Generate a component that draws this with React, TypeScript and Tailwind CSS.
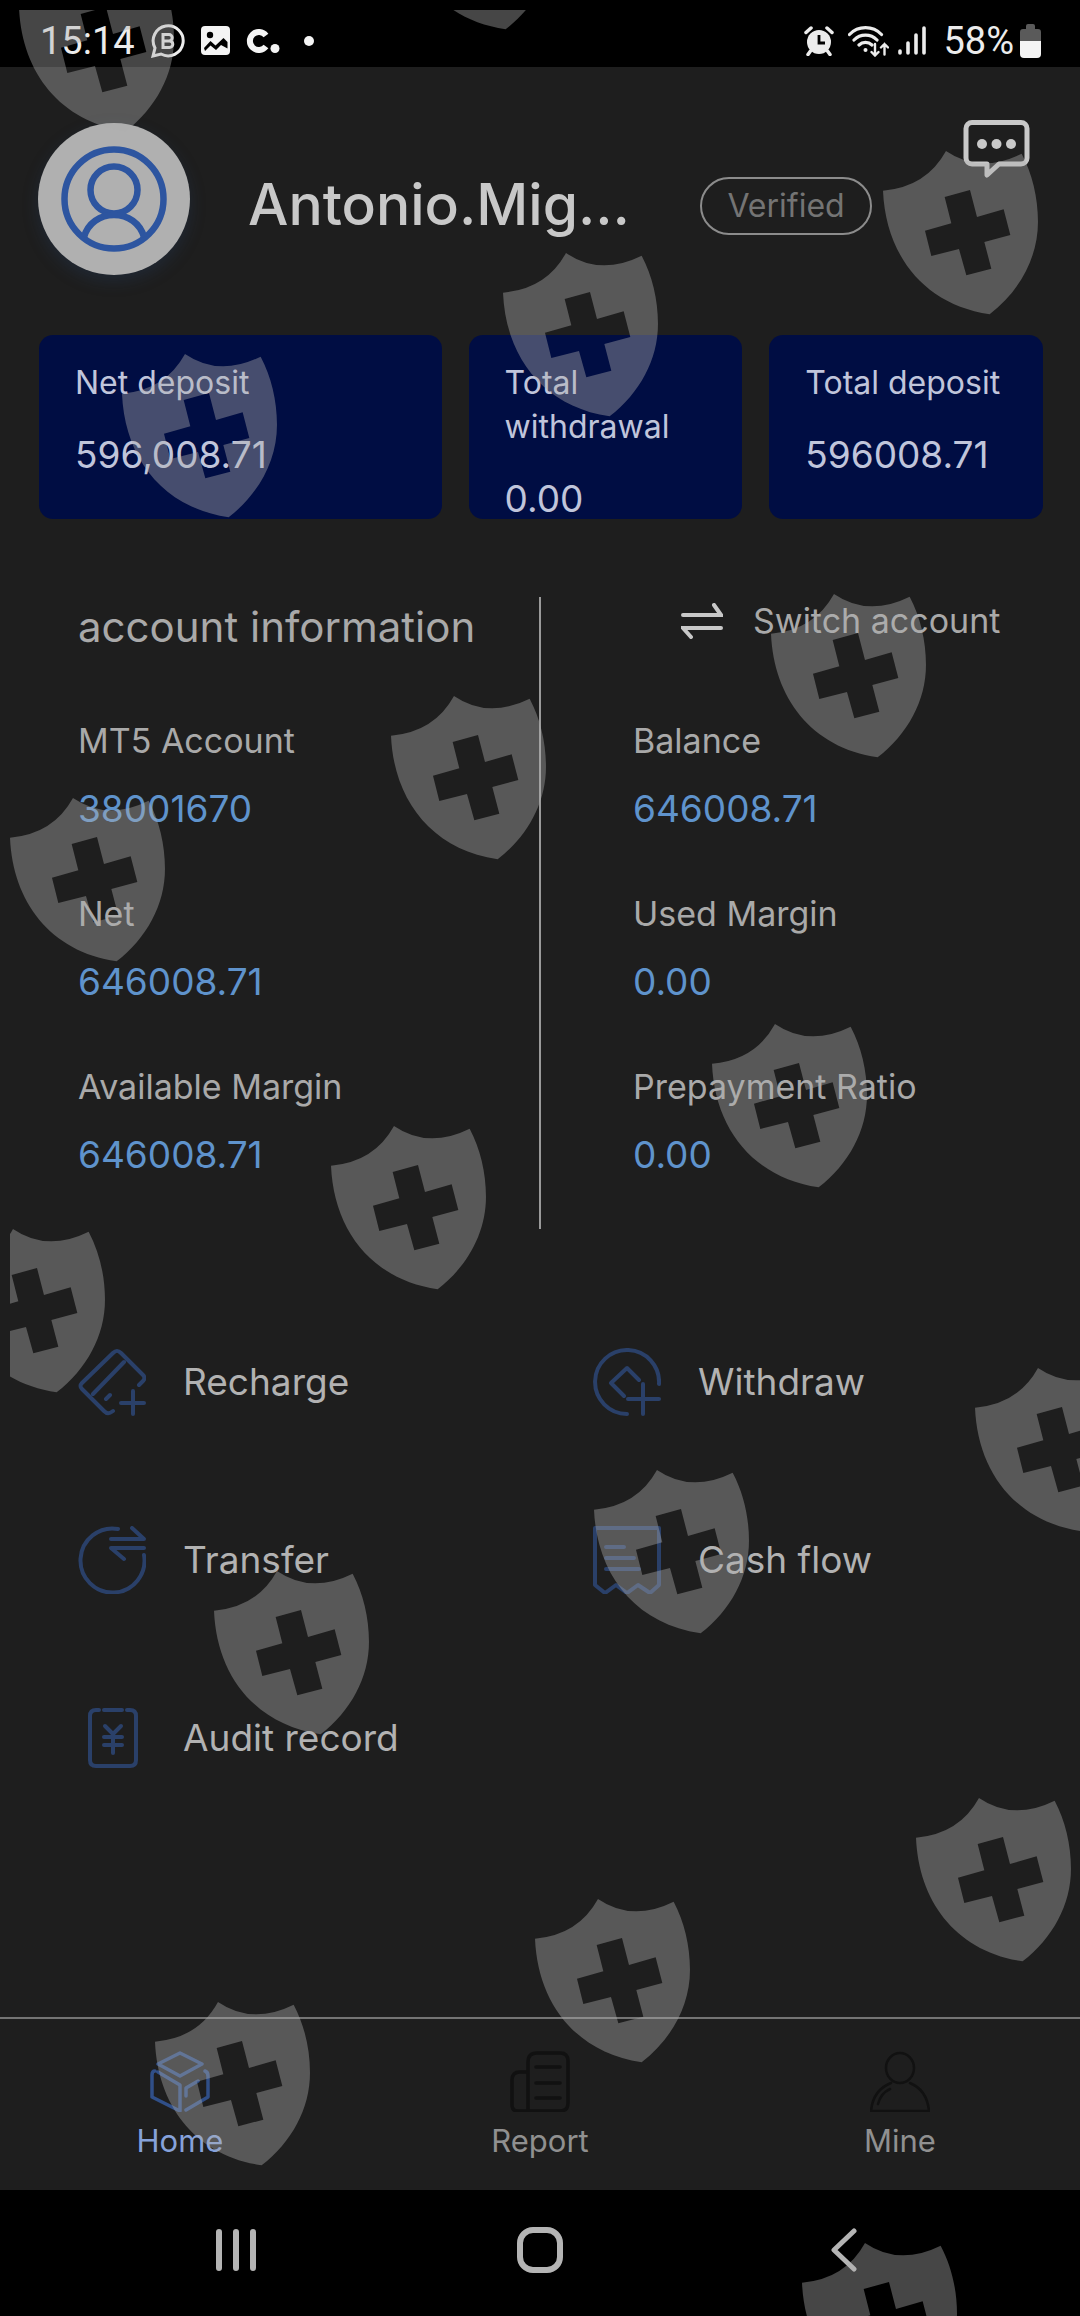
import type { ReactNode } from "react";

const summary = [
  { label: "Net deposit", value: "596,008.71" },
  { label: "Total withdrawal", value: "0.00" },
  { label: "Total deposit", value: "596008.71" },
];

const accountLeft = [
  { label: "MT5 Account", value: "38001670" },
  { label: "Net", value: "646008.71" },
  { label: "Available Margin", value: "646008.71" },
];

const accountRight = [
  { label: "Balance", value: "646008.71" },
  { label: "Used Margin", value: "0.00" },
  { label: "Prepayment Ratio", value: "0.00" },
];

// top left corner of every shield of the security overlay
const shields = [
  [19, -32],
  [399, -134],
  [883, 151],
  [503, 253],
  [122, 354],
  [771, 594],
  [391, 696],
  [10, 798],
  [712, 1024],
  [331, 1126],
  [-50, 1229],
  [975, 1368],
  [594, 1470],
  [214, 1571],
  [916, 1798],
  [535, 1899],
  [155, 2002],
  [802, 2243],
];

function StatusBar() {
  return (
    <header className="flex h-[67px] items-center justify-between bg-black pt-[15px] pr-[39px] pb-[1px] pl-10 font-[Roboto,sans-serif] text-[38px] leading-[50px] text-[#ececec]">
      <div className="flex items-center">
        <span>15:14</span>
        <svg className="ml-4 h-[34px] w-[34px]" viewBox="0 0 34 34" fill="none" stroke="#ececec">
          <path d="M2 32l2-8a15 15 0 1 1 6 6z" strokeWidth="3" />
          <path d="M12 10.500h6a3.200 3.200 0 0 1 0 6.400h-6zM12 16.900h6.500a3.300 3.300 0 0 1 0 6.600H12z" strokeWidth="3" />
        </svg>
        <svg className="ml-4 h-[29px] w-[29px]" viewBox="0 0 29 29">
          <rect width="29" height="29" rx="4" fill="#f4f4f4" />
          <circle cx="9" cy="9" r="3.200" fill="#000" />
          <path d="M3 22l6.500-7 5 4.500 8-7.500 4 4v6.500L20 19l-5 5-5.500-4.500L4 25z" fill="#000" />
        </svg>
        <svg className="ml-4 h-6 w-[34px]" viewBox="0 0 34 24">
          <path d="M20 6.500a9 9 0 1 0 0 11" fill="none" stroke="#f4f4f4" strokeWidth="6" />
          <circle cx="29" cy="19.500" r="4.500" fill="#f4f4f4" />
        </svg>
        <span className="ml-6 h-[10px] w-[10px] rounded-full bg-[#f4f4f4]" />
      </div>
      <div className="flex items-center">
        <svg className="h-[30px] w-[30px]" viewBox="0 0 30 30">
          <circle cx="15" cy="16" r="12" fill="#ececec" />
          <path d="M2 6.500l5-4.500M28 6.500L23 2M6.500 25L4 28.500M23.500 25l2.500 3.500" stroke="#ececec" strokeWidth="3.500" strokeLinecap="round" />
          <path d="M15 9v8h6" fill="none" stroke="#000" strokeWidth="2.800" />
        </svg>
        <svg className="ml-[14px] h-8 w-[41px]" viewBox="0 0 41 32" fill="none" stroke="#ececec" strokeLinecap="round">
          <path d="M1.500 9.500a22 22 0 0 1 32 0M6 15a16 16 0 0 1 23 0M11 20a9.500 9.500 0 0 1 13 0" strokeWidth="3.200" />
          <circle cx="17.500" cy="25" r="2" fill="#ececec" stroke="none" />
          <path d="M27 19v11M23.500 27l3.500 3.500 3.500-3.500M36.500 29.500V19M33 22.500l3.500-3.500 3.500 3.500" strokeWidth="2.400" />
        </svg>
        <svg className="ml-2 h-[31px] w-[30px]" viewBox="0 0 30 31" stroke="#ececec" strokeWidth="3.600" strokeLinecap="round">
          <path d="M3 26v2M11 18v10M19 10v18M27 3v25" />
        </svg>
        <span className="ml-4">58%</span>
        <svg className="ml-[6px] h-[34px] w-[21px]" viewBox="0 0 21 34">
          <path d="M6 2a2 2 0 0 1 2-2h5a2 2 0 0 1 2 2v3h3a3 3 0 0 1 3 3v9H0V8a3 3 0 0 1 3-3h3z" fill="#5a5a5a" />
          <path d="M0 17h21v13a4 4 0 0 1-4 4H4a4 4 0 0 1-4-4z" fill="#f4f4f4" />
        </svg>
      </div>
    </header>
  );
}

function Profile() {
  return (
    <section className="flex items-start pt-14 pr-[38px] pl-[38px]">
      <div className="flex h-[152px] w-[152px] shrink-0 items-center justify-center rounded-full bg-[#b0b0b0] shadow-[0_6px_16px_rgba(40,70,120,0.25)]">
        <svg className="h-[106px] w-[106px]" viewBox="0 0 106 106" fill="none" stroke="#2d55a0" strokeWidth="6.500">
          <circle cx="53" cy="53" r="49.500" />
          <circle cx="53" cy="44" r="23.500" />
          <path d="M23 91c4-14 16-22 30-22s26 8 30 22" />
        </svg>
      </div>
      <h1 className="ml-[58px] w-[400px] truncate pt-12 text-[57px] leading-[68px] font-medium text-[#c8c8c8]">Antonio.Mig…</h1>
      <span className="mt-[54px] ml-[52px] flex h-[58px] w-[172px] shrink-0 items-center justify-center rounded-full border-2 border-[#8c8c8c] text-[32px] leading-none text-[#747474]">
        Verified
      </span>
      <button aria-label="Messages" className="-mt-[3px] mr-3 ml-auto">
        <svg className="h-[58px] w-[67px]" viewBox="0 0 67 58" fill="none" stroke="#c8c8c8" strokeWidth="5" strokeLinejoin="round">
          <path d="M9 2.500h49a6 6 0 0 1 6 6V38a6 6 0 0 1-6 6H36L24 55V44H9a6 6 0 0 1-6-6V8.500a6 6 0 0 1 6-6z" />
          <g fill="#c8c8c8" stroke="none">
            <circle cx="19" cy="24" r="5" />
            <circle cx="33.500" cy="24" r="5" />
            <circle cx="48" cy="24" r="5" />
          </g>
        </svg>
      </button>
    </section>
  );
}

function AccountList({ items }: { items: { label: string; value: string }[] }) {
  return (
    <dl className="flex flex-col gap-[61px]">
      {items.map((item) => (
        <div key={item.label} className="leading-[44px]">
          <dt className="text-[34px] text-[#a9a9a9]">{item.label}</dt>
          <dd className="mt-6 text-[37px] text-[#5f93cc]">{item.value}</dd>
        </div>
      ))}
    </dl>
  );
}

function Action({ label, children }: { label: string; children: ReactNode }) {
  return (
    <button className="flex items-center gap-[37px] text-left text-[37px] leading-[44px] text-[#b2b2b2]">
      <svg className="h-[68px] w-[68px]" viewBox="0 0 68 68" fill="none" stroke="#2a4069" strokeWidth="4" strokeLinecap="round" strokeLinejoin="round">
        {children}
      </svg>
      {label}
    </button>
  );
}

function Tab({ label, color, children }: { label: string; color: string; children: ReactNode }) {
  return (
    <a href="#" className="flex flex-col items-center gap-[11px] pt-8 pb-[31px]">
      <svg className="h-[61px] w-[60px]" viewBox="0 0 60 61" fill="none" strokeWidth="3.500" strokeLinecap="round" strokeLinejoin="round">
        {children}
      </svg>
      <span className={color}>{label}</span>
    </a>
  );
}

function Shields() {
  return (
    <svg className="pointer-events-none absolute top-[10px] left-[10px] h-[calc(100%-10px)] w-[calc(100%-10px)]" aria-hidden="true">
      <defs>
        <path
          id="shield"
          transform="scale(0.3333)"
          fill="#afafaf"
          fillOpacity="0.4"
          fillRule="evenodd"
          d="M0 119Q130 108 189 0Q291 70 416 8C448 68 465 140 465 212C465 320 410 420 320 490C120 460 8 310 0 119ZM185 138L205 217L126 239L145 315L228 294L250 373L325 353L304 273L382 252L362 175L282 198L261 117Z"
        />
      </defs>
      <g transform="translate(-10 -10)">
        {shields.map(([x, y]) => (
          <use key={`${x}-${y}`} href="#shield" x={x} y={y} />
        ))}
      </g>
    </svg>
  );
}

export default function App() {
  return (
    <div className="relative flex min-h-screen flex-col overflow-hidden bg-[#1e1e1e] font-[Inter,sans-serif]">
      <StatusBar />

      <main className="flex-1">
        <Profile />

        <section className="mt-[60px] grid grid-cols-[403fr_274fr_274fr] gap-[27px] pr-[37px] pl-[39px]">
          {summary.map((item) => (
            <div key={item.label} className="rounded-[14px] bg-[#000d43] px-9 pt-[26px] leading-[44px] text-[#c0c5db]">
              <p className="text-[32px]">{item.label}</p>
              <p className="mt-7 -mb-[2px] text-[37px]">{item.value}</p>
            </div>
          ))}
        </section>

        <section className="mt-[78px] grid grid-cols-[539fr_541fr]">
          <div className="pt-[6px] pb-[52px] pl-[78px]">
            <h2 className="mb-[68px] text-[42px] leading-[48px] text-[#a9a9a9]">account information</h2>
            <AccountList items={accountLeft} />
          </div>
          <div className="border-l-2 border-[#9a9a9a] pl-[92px]">
            <button className="mb-[75px] ml-12 flex items-center gap-[30px] text-[34px] leading-[47px] text-[#a9a9a9]">
              <svg className="h-9 w-[42px]" viewBox="0 0 42 36" fill="none" stroke="#c8c8c8" strokeWidth="4" strokeLinecap="round">
                <path d="M2 12h38L33 2M40 25H2l8 9" />
              </svg>
              Switch account
            </button>
            <AccountList items={accountRight} />
          </div>
        </section>

        <section className="mt-[119px] grid grid-cols-[515fr_487fr] gap-y-[110px] pl-[78px]">
          <Action label="Recharge">
            <path d="M61 37l4-4c2-2 2-4 0-6L43 5c-3-3-5-3-8 0L4 35c-2 2-2 4 0 6l22 22c3 3 5 3 9 0M46 14L15 46M28 51l4-4M43 55h23M55 43v23" />
          </Action>
          <Action label="Withdraw">
            <path d="M66 36A32 32 0 1 0 34 66M46 32L34 20 18 35l13 13M35 51h31M50 36v30" />
          </Action>
          <Action label="Transfer">
            <path d="M40 3A32 32 0 1 0 66 29M33 13h33L54 2M66 22H33l13 11" />
          </Action>
          <Action label="Cash flow">
            <path d="M2 2h64v57l-9 8-12-8-11 8-11-8-11 8-10-8zM13 21h18M13 32h28M13 43h33" />
          </Action>
          <Action label="Audit record">
            <path d="M21 6h-3q-6 0-6 6v44q0 6 6 6h34q6 0 6-6V12q0-6-6-6h-3M26 6h18M27 22l8 8 8-8M26 33h18M26 41h18M35 30v19" />
          </Action>
        </section>
      </main>

      <nav className="grid grid-cols-3 border-t-2 border-[#747474] text-[31px] leading-9">
        <Tab label="Home" color="text-[#86a2da]">
          <path d="M30 2l22 11-22 12L8 13zM5 20q-3 0-3 4v22l28 14V34L8 21M55 20q3 1 3 5v21L36 59M36 45v-8l12-7" stroke="#304f88" />
        </Tab>
        <Tab label="Report" color="text-[#909090]">
          <path d="M27 2h23q8 0 8 8v42q0 8-8 8H8q-6 0-6-6V29q0-8 8-8h8M18 60V11q0-9 9-9M26 16h24M26 32h24M26 47h24" stroke="#111" />
        </Tab>
        <Tab label="Mine" color="text-[#909090]">
          <path d="M30 2a14 15 0 0 1 0 30a14 15 0 0 1 0-30M21 32Q3 39 1 60h58Q57 39 40 32M8 53q3-11 12-15" strokeWidth="2.500" stroke="#111" />
        </Tab>
      </nav>

      <footer className="grid h-[126px] grid-cols-3 place-items-center bg-black px-[84px] pb-[6px]">
        <button aria-label="Recent apps">
          <svg className="h-11 w-[42px]" viewBox="0 0 42 44" stroke="#b4b4b4" strokeWidth="6" strokeLinecap="round">
            <path d="M4 4v36M21 4v36M38 4v36" />
          </svg>
        </button>
        <button aria-label="Home screen">
          <svg className="h-[46px] w-[46px]" viewBox="0 0 46 46" fill="none" stroke="#b4b4b4" strokeWidth="6">
            <rect x="3" y="3" width="40" height="40" rx="13" />
          </svg>
        </button>
        <button aria-label="Back">
          <svg className="h-11 w-7" viewBox="0 0 28 44" fill="none" stroke="#b4b4b4" strokeWidth="5" strokeLinecap="round" strokeLinejoin="round">
            <path d="M24 3L4 22l20 19" />
          </svg>
        </button>
      </footer>

      <Shields />
    </div>
  );
}
